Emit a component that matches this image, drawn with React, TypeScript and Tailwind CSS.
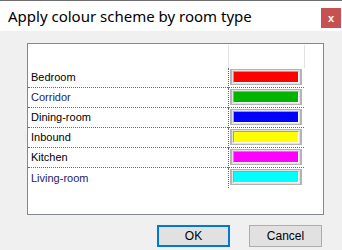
import React from 'react';

const rooms = [
  { name: 'Bedroom', color: 'bg-[#ff0000]', text: 'text-black' },
  { name: 'Corridor', color: 'bg-[#00b400]', text: 'text-[#1c2466]' },
  { name: 'Dining-room', color: 'bg-[#0000ff]', text: 'text-black' },
  { name: 'Inbound', color: 'bg-[#ffff00]', text: 'text-black' },
  { name: 'Kitchen', color: 'bg-[#ff00ff]', text: 'text-black' },
  { name: 'Living-room', color: 'bg-[#00ffff]', text: 'text-[#1c2466]' },
];

const App = () => {
  return (
    <div className="w-[342px] h-[250px] bg-[#f0f0f0] flex flex-col overflow-hidden">
      {/* Title bar */}
      <div className="h-[31px] bg-white border-t border-[#6e6e6e] flex items-start justify-between shrink-0">
        <span className="ml-[8px] mt-[5px] text-[15px] leading-[20px] text-black font-['Noto_Sans',sans-serif]">
          Apply colour scheme by room type
        </span>
        <button className="mt-[7px] mr-[1px] w-[20px] h-[20px] bg-[#c75050] text-white text-[11px] font-bold leading-none flex items-center justify-center font-['Liberation_Sans',sans-serif]">
          x
        </button>
      </div>

      {/* List panel */}
      <div className="ml-[27px] mt-[12px] w-[297px] h-[172px] border border-[#828790] bg-white font-['Liberation_Sans',sans-serif] text-[11px]">
        {/* Header */}
        <div className="flex h-[24px]">
          <div className="w-[201px] mt-px border-r border-[#e3e3e3]" />
          <div className="w-[76px] mt-px border-r border-[#e3e3e3]" />
        </div>

        {rooms.map((room, i) => (
          <div key={room.name} className="flex h-[20px]">
            <div
              className={`w-[200px] flex items-center pl-[3px] ${room.text} ${
                i < rooms.length - 1 ? 'border-b border-dotted border-[#6a6a6a]' : ''
              }`}
            >
              {room.name}
            </div>
            <div
              className={`w-[76px] border-l border-dotted border-[#6a6a6a] pt-px pl-px ${
                i < rooms.length - 1 ? 'border-b' : ''
              }`}
            >
              <div className="w-[72px] h-[16px] border-x-2 border-y border-[#b4b4b4] bg-[#e3e3e3] p-px">
                <div className="h-full border border-t-[#a0a0a0] border-l-[#a0a0a0] border-b-white border-r-white">
                  <div className={`h-full ${room.color}`} />
                </div>
              </div>
            </div>
          </div>
        ))}
      </div>

      {/* Buttons */}
      <div className="flex justify-end gap-[19px] pr-[20px] mt-[10px] font-['Liberation_Sans',sans-serif] text-[12px] text-black">
        <button className="w-[73px] h-[22px] border-2 border-[#0078d7] bg-[#e1e1e1] flex items-center justify-center">
          OK
        </button>
        <button className="w-[73px] h-[22px] border border-[#adadad] bg-[#e1e1e1] flex items-center justify-center">
          Cancel
        </button>
      </div>
    </div>
  );
};

export default App;
